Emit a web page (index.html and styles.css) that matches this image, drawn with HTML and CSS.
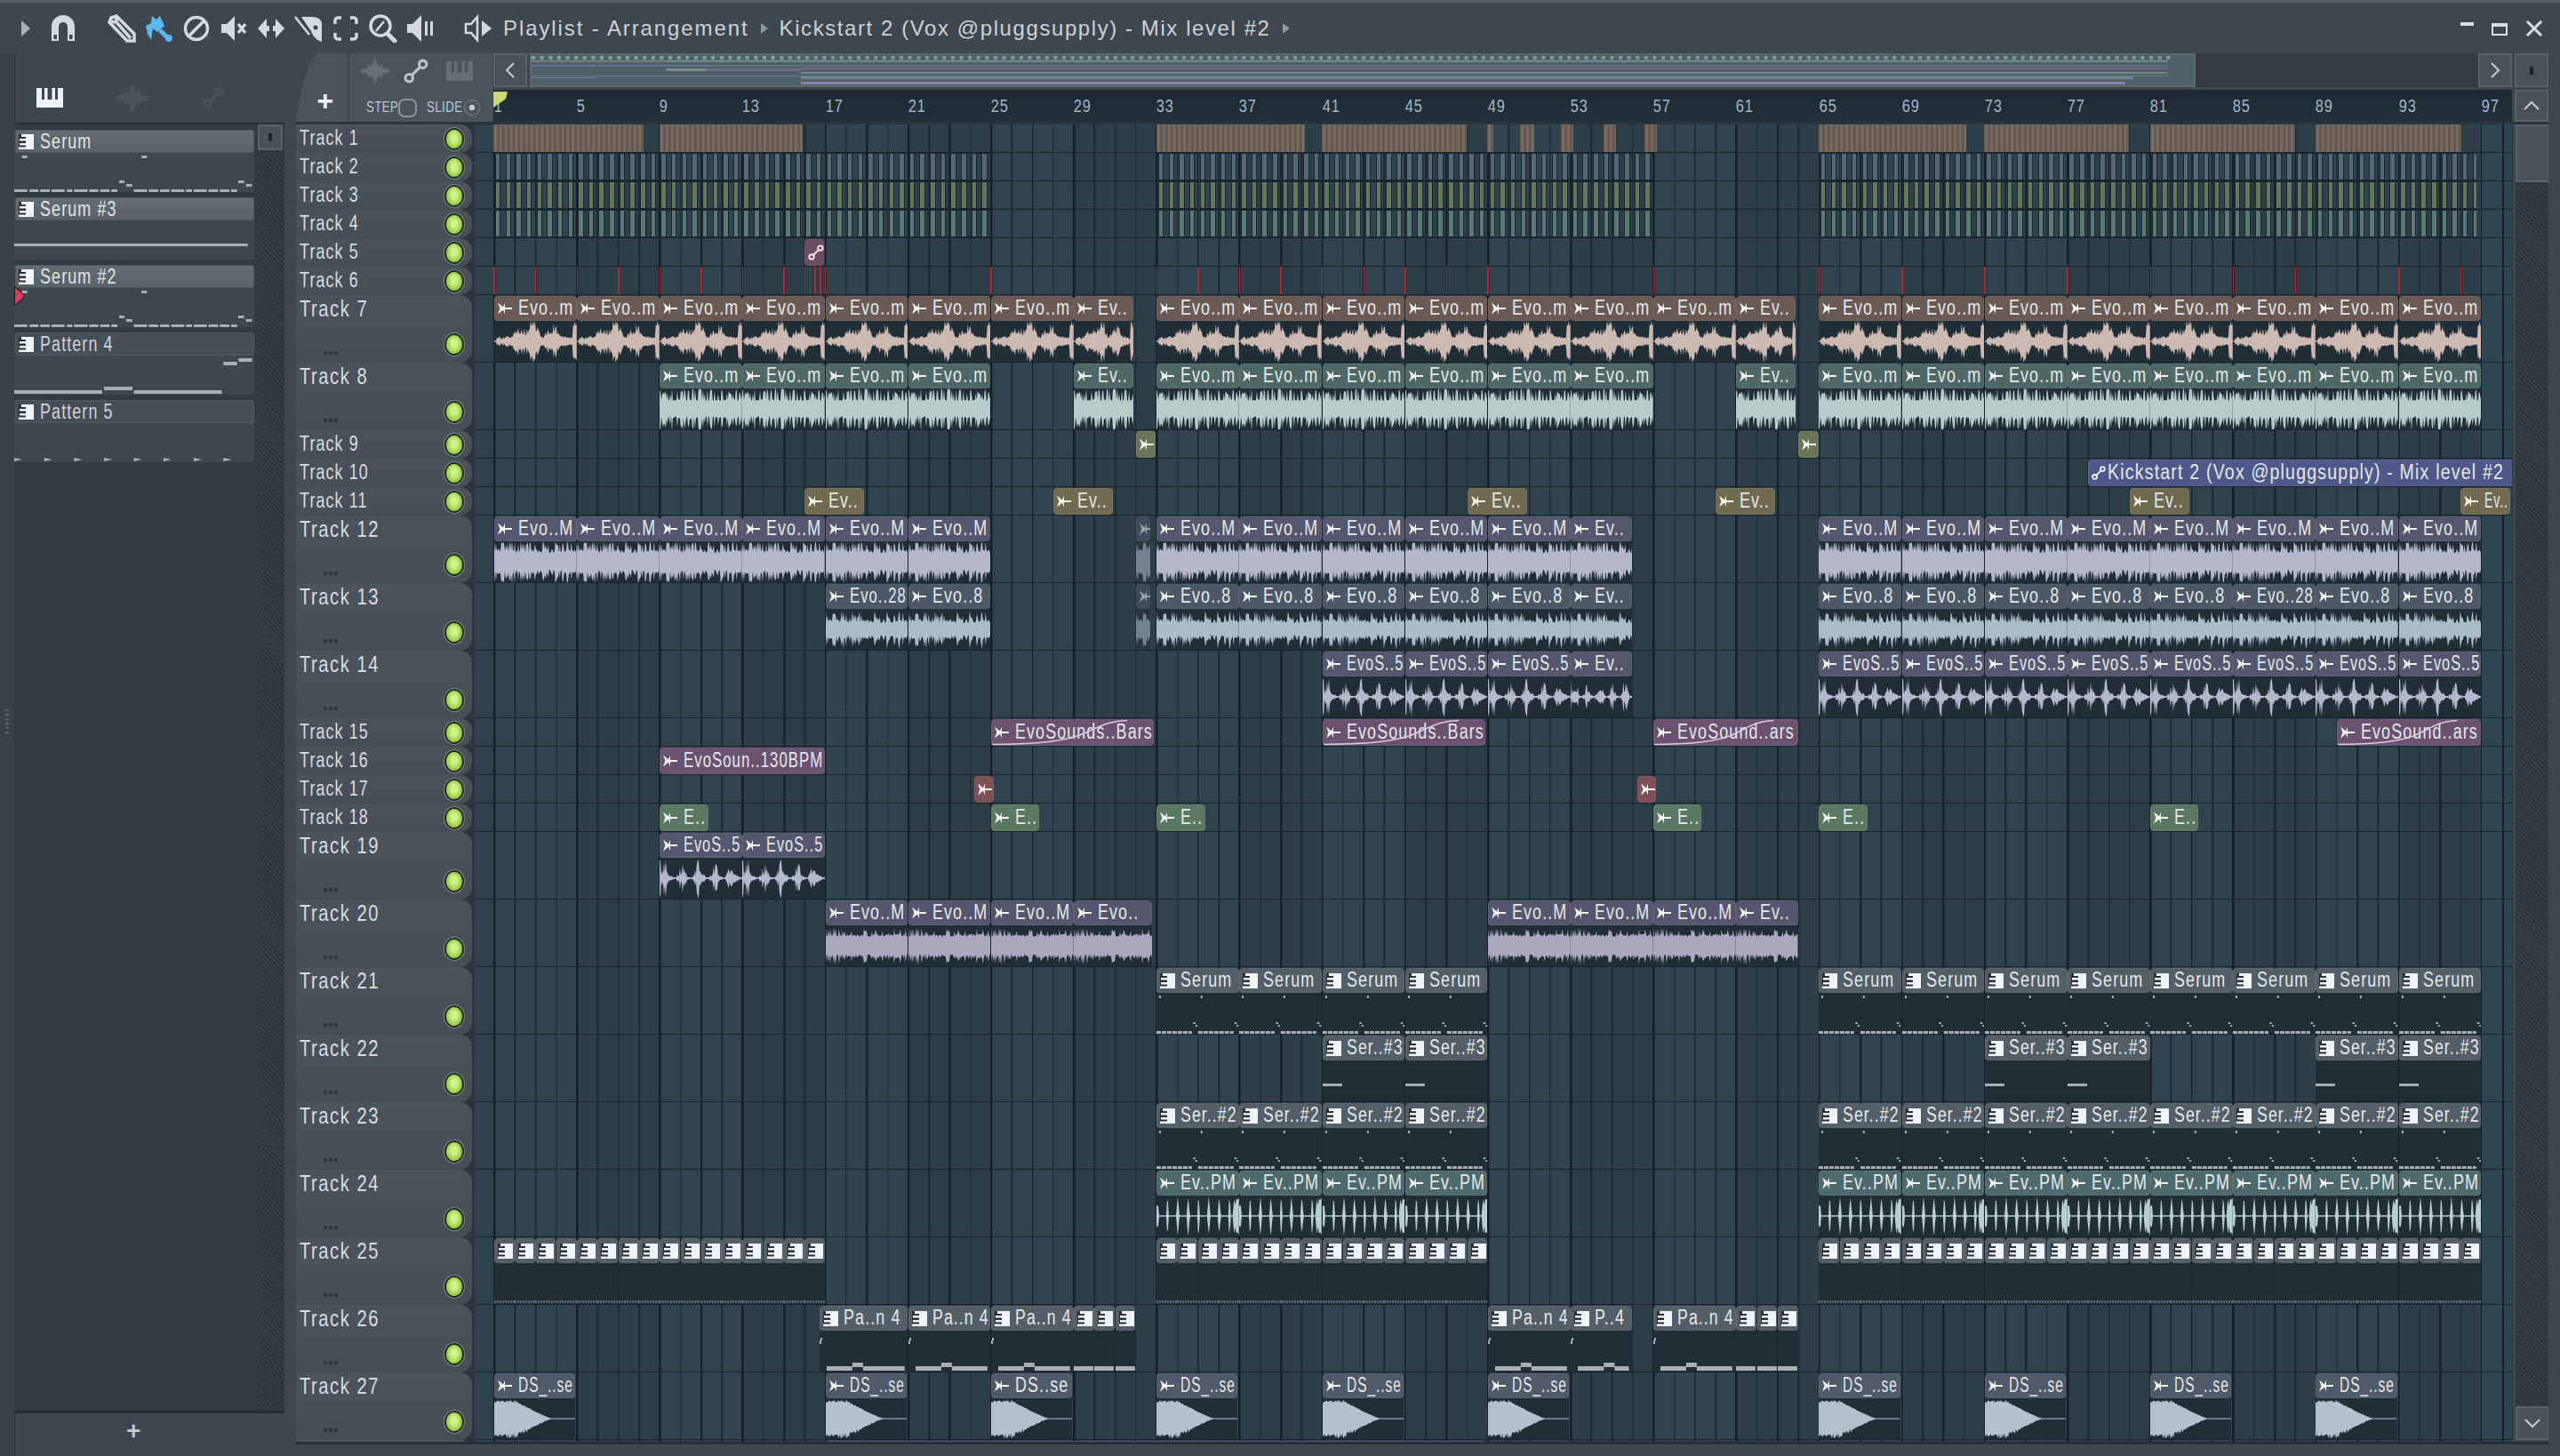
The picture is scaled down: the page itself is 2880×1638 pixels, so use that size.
FILE: index.html
```html
<!DOCTYPE html>
<html lang="en">
<head>
<meta charset="utf-8">
<title>Playlist - Arrangement</title>
<link rel="stylesheet" href="styles.css">
</head>
<body>
<svg class="defs" width="0" height="0" aria-hidden="true">
  <symbol id="i-audio" viewBox="0 0 16 14"><path d="M0 0.5 L6 5.5 L8 0.5 V6 H16 V8 H8 V13.5 L6 8.5 L0 13.5 L2.5 7Z"/></symbol>
  <symbol id="i-pat" viewBox="0 0 17 17"><path d="M8 0H17V17H8ZM3 0H8V3H3ZM1 5H8V7.5H1ZM1 10H8V12.5H1ZM0 14.5H8V17H0Z"/></symbol>
  <symbol id="i-link" viewBox="0 0 20 20"><path class="lk" d="M6.5 13.5L13.5 6.5"/><circle class="lk" cx="4.5" cy="15.5" r="3"/><circle class="lk" cx="15.5" cy="4.5" r="3"/></symbol>
  <symbol id="i-wave" viewBox="0 0 40 34"><path d="M0 17L6 13 9 15 12 8 15 12 20 0 25 12 28 8 31 15 34 13 40 17 34 21 31 19 28 26 25 22 20 34 15 22 12 26 9 19 6 21Z"/></symbol>
  <symbol id="i-piano" viewBox="0 0 30 22"><path d="M0 0H6V13H9V0H12.5V13H17.5V0H21V13H24V0H30V22H0Z"/></symbol>
</svg>
<div class="app">
  <header class="titlebar">
    <span class="tool"><svg viewBox="0 0 32 32"><path class="dim" d="M11 7L21 16 11 25Z"/></svg></span>
    <span class="tool"><svg viewBox="0 0 32 32"><path d="M3 30V14a13 13 0 0 1 26 0V30H21V14a5 5 0 0 0-10 0V30Z"/><path class="cut" d="M5.500 23H9V28H5.500ZM23 23H26.500V28H23Z"/></svg></span>
    <span class="tool sep"><svg viewBox="0 0 32 32"><path class="ln" d="M2 9L4 4 10 2 30 22V30H22ZM3 8L10 9 10 3M10 9L26 27"/></svg></span>
    <span class="tool blue"><svg viewBox="0 0 32 32"><path d="M1 13L7 10 8 2 13 6 17 2 22 13 14 20 9 16 7 29 3 22Z"/><path class="ln" d="M17 18L26 27"/><circle cx="27" cy="27" r="4"/></svg></span>
    <span class="tool"><svg viewBox="0 0 32 32"><circle class="ln" cx="16" cy="16" r="12.500"/><path class="ln" d="M8 24L24 8"/></svg></span>
    <span class="tool"><svg viewBox="0 0 32 32"><path d="M2 11H8L17 2V30L8 21H2Z"/><path class="ln" d="M21 11L29 21M29 11L21 21"/></svg></span>
    <span class="tool"><svg viewBox="0 0 32 32"><path d="M1 16L11 5V13H14V19H11V27ZM31 16L21 5V13H18V19H21V27Z"/></svg></span>
    <span class="tool"><svg viewBox="0 0 32 32"><path d="M8 3H20C28 3 31 7 31 11V31C25 29 21 25 19 19Z"/><circle class="hole" cx="24" cy="15" r="2.500"/><path class="ln thin" d="M1 3L17 23"/></svg></span>
    <span class="tool"><svg viewBox="0 0 32 32"><path class="ln" d="M11 4H7a3 3 0 0 0-3 3V11M21 4h4a3 3 0 0 1 3 3v4M4 21v4a3 3 0 0 0 3 3h4M28 21v4a3 3 0 0 1-3 3h-4"/></svg></span>
    <span class="tool"><svg viewBox="0 0 32 32"><circle class="ln" cx="13" cy="13" r="11"/><path class="ln thin" d="M8 19L17 8"/><path class="ln fat" d="M22 23L29 30"/></svg></span>
    <span class="tool"><svg viewBox="0 0 32 32"><path d="M1 11H7L17 1V31L7 21H1ZM21 8H24V24H21ZM27 8H30V24H27Z"/></svg></span>
    <span class="tool sep2"><svg viewBox="0 0 32 32"><path class="ln thin" d="M2 11H8L15 3V29L8 21H2Z"/><path d="M20 7L31 16 20 25Z"/></svg></span>
    <h1 class="title">Playlist - Arrangement</h1>
    <svg class="crumb" viewBox="0 0 8 12"><path d="M0 0L8 6 0 12Z"/></svg>
    <span class="title second">Kickstart 2 (Vox @pluggsupply) - Mix level #2</span>
    <svg class="crumb" viewBox="0 0 8 12"><path d="M0 0L8 6 0 12Z"/></svg>
    <div class="winctl">
      <span class="w-min"></span>
      <span class="w-max"></span>
      <svg class="w-close" viewBox="0 0 20 20"><path d="M2 2L18 18M18 2L2 18"/></svg>
    </div>
  </header>
  <div class="main">
    <aside class="picker">
      <div class="picker-tabs">
        <svg class="ptab on"><use href="#i-piano"/></svg>
        <svg class="ptab wave-i"><use href="#i-wave"/></svg>
        <svg class="ptab link-i"><use href="#i-link"/></svg>
      </div>
      <div class="picker-panel">
        <div class="picker-list" id="pickerList"></div>
        <div class="pscroll">
          <span class="sbtn small"><i class="pip"></i></span>
          <span class="hatch"></span>
        </div>
        <svg class="marker" viewBox="0 0 13 22"><path d="M0.500 0.500L12 11 0.500 21.500Z"/></svg>
      </div>
      <div class="picker-foot">+</div>
    </aside>
    <section class="playlist">
      <div class="topbar">
        <div class="plus-tab"><span>+</span></div>
        <div class="toolpanel">
          <div class="tp-icons">
            <svg class="tp-wave"><use href="#i-wave"/></svg>
            <svg class="tp-link"><use href="#i-link"/></svg>
            <svg class="tp-piano"><use href="#i-piano"/></svg>
          </div>
          <div class="tp-modes">
            <span class="tp-t">STEP</span><i class="tp-box"></i>
            <span class="tp-t slide">SLIDE</span><i class="tp-radio"></i>
          </div>
        </div>
        <div class="timeline">
          <div class="overview-row">
            <span class="sbtn"><svg class="chev" viewBox="0 0 12 20"><path d="M10 2L2 10 10 18"/></svg></span>
            <div class="overview-track"><div class="overview" id="overview"></div></div>
            <span class="sbtn"><svg class="chev" viewBox="0 0 12 20"><path d="M2 2L10 10 2 18"/></svg></span>
          </div>
          <div class="ruler" id="ruler">
            <svg class="playhead" viewBox="0 0 17 19"><path d="M0 0H16L14 8 0 18Z"/></svg>
          </div>
        </div>
        <div class="topscroll">
          <span class="sbtn"><i class="pip"></i></span>
          <span class="sbtn"><svg class="chev" viewBox="0 0 20 12"><path d="M2 10L10 2 18 10"/></svg></span>
        </div>
      </div>
      <div class="tracks">
        <div class="rows" id="rows"></div>
        <div class="vscroll">
          <span class="thumb"></span>
          <span class="hatch"></span>
          <span class="sbtn"><svg class="chev" viewBox="0 0 20 12"><path d="M2 2L10 10 18 2"/></svg></span>
        </div>
      </div>
    </section>
  </div>
  <i class="grip"></i>
</div>
<script src="script.js"></script>
</body>
</html>
```
FILE: styles.css
```css
* { box-sizing: border-box; }
html, body { margin: 0; padding: 0; }
body {
  width: 2880px; height: 1638px; overflow: hidden;
  background: #3f474e; color: #d5dce0;
  font-family: "Liberation Sans", Roboto, sans-serif;
  font-size: 23px; letter-spacing: 1.4px;
}
.defs { position: absolute; }
.app { position: relative; width: 2880px; height: 1638px; display: flex; flex-direction: column; border-top: 3px solid #59616a; }
.grip { position: absolute; left: 6px; top: 795px; width: 4px; height: 28px; background: repeating-linear-gradient(180deg, #59616a 0 2px, transparent 2px 5px); }
/* FL's narrow UI face: the Arial-metric font squeezed horizontally */
.nar { display: inline-block; flex: none; transform: scaleX(.78); transform-origin: 0 50%; white-space: nowrap; }

/* title bar */
.titlebar { height: 57px; flex: none; display: flex; align-items: center; padding-left: 8px; color: #d5dade; }
.tool { width: 42px; height: 32px; display: flex; justify-content: center; flex: none; }
.tool svg { width: 32px; height: 32px; fill: #d5dade; }
.tool .dim { fill: #aab2b8; }
.tool .cut { fill: #3f474e; }
.tool .ln { fill: none; stroke: #d5dade; stroke-width: 3.5; }
.tool .thin { stroke-width: 2.5; }
.tool .fat { stroke-width: 5; stroke-linecap: round; }
.tool .hole { fill: #3f474e; }
.tool.sep { margin-left: 24px; }
.tool.sep2 { margin-left: 23px; }
.tool.blue svg { fill: #5cb8f0; }
.tool.blue .ln { stroke: #5cb8f0; stroke-width: 5; }
.title { margin: 0 0 0 7px; font: 400 24px "Liberation Sans", Arial, sans-serif; letter-spacing: 1.900px; color: #ccd3d8; white-space: nowrap; }
.title.second { margin-left: 0; letter-spacing: 1.580px; }
.crumb { width: 8px; height: 12px; fill: #8f989e; margin: 0 13px; }
.winctl { margin-left: auto; display: flex; align-items: center; padding-right: 19px; gap: 20px; color: #d9e0e4; }
.w-min { width: 15px; height: 4px; background: #d9e0e4; margin-bottom: 9px; }
.w-max { width: 18px; height: 14px; border: 2px solid #d9e0e4; border-top-width: 4px; margin-top: 2px; }
.w-close { width: 20px; height: 20px; fill: none; stroke: #d9e0e4; stroke-width: 3; }

.main { flex: 1; display: flex; padding-left: 16px; box-shadow: inset 16px 0 0 #3a4249, inset 17px 0 0 #30383f; min-height: 0; }

/* picker */
.picker { width: 304px; flex: none; display: flex; flex-direction: column; height: 1576px; }
.picker-tabs { height: 78px; flex: none; position: relative; display: flex; align-items: center; padding-top: 22px; }
.ptab { width: 30px; height: 22px; margin-left: 25px; fill: #4c545b; }
.ptab.on { fill: #eef2f4; }
.ptab.wave-i { width: 42px; height: 34px; margin-left: 57px; }
.ptab.link-i { width: 24px; height: 24px; margin-left: 58px; stroke: #4c545b; }
.lk { stroke-width: 2.2; fill: none; }
.picker-panel { flex: 1; position: relative; display: flex; background: #323b43; border-top: 2px solid #262f36; min-height: 0; }
.picker-list { width: 270px; padding-top: 6px; flex: none; display: flex; flex-direction: column; gap: 6px; }
.pclip { height: 70px; background: #3f474e; display: flex; flex-direction: column; border-radius: 2px; }
.pclip-h { height: 26px; background: #474f56; border: 1px solid #52595f; border-radius: 2px; display: flex; align-items: center; padding-left: 3px; margin-left: 1px; color: #cdd5da; line-height: 24px; }
.pclip.sel .pclip-h { background: linear-gradient(#646c72, #5a6268); color: #e0e6e9; }
.pclip-h .nar { margin-left: 7px; }
.pat { width: 17px; height: 17px; fill: #eef4f7; background: #2b3137; flex: none; }
.pnotes { width: 270px; height: 44px; fill: #a8b0b5; display: block; }
.pscroll { width: 30px; margin-left: 4px; display: flex; flex-direction: column; }
.pscroll .sbtn { height: 29px; width: 28px; flex: none; }
.hatch { flex: 1; display: block; background: repeating-linear-gradient(45deg, #2d343a 0 2px, #363d43 2px 4px); }
.marker { position: absolute; left: 0; top: 182px; width: 13px; height: 22px; fill: #e53a60; stroke: #1d1416; stroke-width: 1; }
.picker-foot { height: 49px; flex: none; border-top: 3px solid #262f36; display: flex; align-items: center; justify-content: center; font: 700 28px "Liberation Sans", sans-serif; color: #bfc8cd; padding: 0 34px 6px 0; }

/* playlist */
.playlist { flex: 1; min-width: 0; margin-left: 13px; padding-right: 13px; display: flex; flex-direction: column; height: 1568px; }
.topbar { display: flex; height: 77px; flex: none; }
.plus-tab { width: 58px; background: #4c545b; clip-path: path("M0 77C5 40 12 12 24 0H58V77Z"); display: flex; align-items: flex-end; justify-content: center; padding: 0 0 2px 9px; font: 700 32px "Liberation Sans", sans-serif; color: #eef2f4; line-height: 44px; }
.toolpanel { width: 161px; margin-left: 2px; background: #4c545b; display: flex; flex-direction: column; }
.tp-icons { height: 40px; display: flex; align-items: center; fill: #666e74; }
.tp-wave { width: 40px; height: 30px; margin-left: 9px; }
.tp-link { width: 34px; height: 28px; margin-left: 9px; stroke: #bcc4c9; }
.tp-piano { width: 30px; height: 22px; margin-left: 17px; }
.tp-modes { display: flex; align-items: center; height: 28px; margin-top: 7px; padding-left: 19px; font-size: 16px; letter-spacing: .6px; color: #bfc7cc; }
.tp-t { display: inline-block; flex: none; width: 36px; transform: scaleX(.82); transform-origin: 0 50%; white-space: nowrap; }
.tp-box { width: 21px; height: 21px; flex: none; border: 2px solid #8d959b; border-radius: 7px; margin-left: 0; }
.tp-t.slide { margin-left: 11px; }
.tp-radio { width: 18px; height: 18px; flex: none; margin-left: 6px; border-radius: 50%; border: 1px solid #7f878d; background: radial-gradient(circle, #c5cdd2 0 3px, #4c545b 3.6px); }
.timeline { width: 2271px; margin-left: 1px; display: flex; flex-direction: column; }
.overview-row { display: flex; height: 38px; flex: none; }
.sbtn { width: 38px; height: 38px; flex: none; background: #4a5259; border: 2px solid #5a6268; display: flex; align-items: center; justify-content: center; }
.pip { display: block; width: 4px; height: 9px; background: #1c2329; }
.chev { width: 14px; height: 20px; fill: none; stroke: #c5cdd2; stroke-width: 2; }
.topscroll .chev, .vscroll .chev { width: 20px; height: 12px; }
.overview-track { flex: 1; margin-left: 3px; background: #353d44; min-width: 0; }
.overview { width: 1874px; height: 38px; background: #4f6068; border: 2px solid #5e6a70; overflow: hidden; }
.overview svg { width: 1870px; height: 34px; display: block; }
.ruler { position: relative; height: 36px; margin-top: 3px; background: linear-gradient(#1d2a32, #22303a); display: flex; font-size: 20px; letter-spacing: 1px; color: #a4b6c8; align-items: center; }
.ruler span { width: 93.160px; flex: none; padding-left: 1px; transform: scaleX(.82); transform-origin: 0 50%; }
.playhead { position: absolute; left: 0; top: 2px; width: 17px; height: 19px; fill: #c8da72; stroke: #93a350; stroke-width: .6; z-index: 1; }
.topscroll { width: 38px; margin-left: 3px; flex: none; display: flex; flex-direction: column; gap: 3px; }
.topscroll .sbtn:last-child { height: 36px; }

.tracks { height: 1488px; flex: none; display: flex; border-top: 3px solid #2a343b; border-bottom: 3px solid #262f36; overflow: hidden; }
.rows { width: 2494px; flex: none; overflow: hidden; background: #2c353c; box-shadow: -1px 0 0 #262f36; }
.row { display: flex; height: 32px; }
.row.tall { height: 76px; }
.head { width: 198px; flex: none; background: linear-gradient(#4c535a, #464e55); border-radius: 0 14px 14px 0; display: flex; align-items: center; justify-content: space-between; padding: 0 11px 0 4px; color: #d6dde1; line-height: 28px; }
.head > .nar { margin-top: -3px; }
.row.tall .head { flex-direction: column; align-items: stretch; justify-content: flex-start; font-size: 26px; letter-spacing: 1.900px; padding-top: 1px; }
.row.tall .head > .nar { margin-top: 0; }
.head-foot { margin-top: auto; display: flex; justify-content: space-between; align-items: flex-end; padding: 0 0 10px 27px; }
.dots { display: flex; gap: 2px; margin-bottom: -1px; }
.dots i { width: 4px; height: 4px; background: #2f363c; }
.led { width: 18px; height: 21px; flex: none; border-radius: 50%; background: radial-gradient(ellipse at 50% 45%, #d2f08c 0 25%, #9acb3e 65%, #5d8d1c 100%); box-shadow: 0 0 0 2px #1f2b1e, 0 0 0 3px #7f8a80; }
.lane { position: relative; width: 2292px; margin-left: 3px; flex: none; overflow: hidden; border-bottom: 1px solid #18232b;
  background-color: #2e3f4a;
  background-image:
    repeating-linear-gradient(90deg, #141f27 0 1.700px, transparent 1.700px 93.160px),
    repeating-linear-gradient(90deg, #17232b 0 1.600px, transparent 1.600px 46.580px),
    repeating-linear-gradient(90deg, #1c2832 0 1.500px, transparent 1.500px 23.290px),
    repeating-linear-gradient(90deg, #31434e 0 93.160px, #2d3e49 93.160px 186.320px);
  background-position: 21.300px 0;
}
.lane::before { content: ""; position: absolute; left: 0; top: 0; bottom: 0; width: 21px; background: #2f414b; }
.lane::after { content: ""; position: absolute; left: 2258px; top: 0; bottom: 0; width: 34px; background: linear-gradient(90deg, #2d4652 0 23px, #17232b 23px 25px, #2d4652 25px); }
.clip { position: absolute; top: 1px; height: 30px; z-index: 1; display: flex; flex-direction: column; border-radius: 4px; overflow: hidden; }
.tall .clip { height: 74px; background: #212e36; border-radius: 4px 4px 0 0; }
.clip-h { height: 28px; flex: none; border-radius: 4px; display: flex; align-items: center; padding-left: 4px; background: var(--hc); box-shadow: inset 0 0 0 1px rgba(255,255,255,.05); color: #e4e9ea; overflow: hidden; line-height: 28px; position: relative; }
.clip-h .nar { margin-top: -3px; }
.row:not(.tall) .clip-h { height: 30px; }
.ci { width: 16px; height: 14px; flex: none; margin-right: 7px; fill: #f6f8f4; }
.pi { width: 17px; height: 17px; flex: none; margin-right: 6px; fill: #eef4f7; background: #2b3137; }
.clip-body { flex: 1; display: block; width: 100%; min-height: 0; }
.wave-svg { fill: var(--wc); }
.note-svg { fill: #a8b0b5; stroke: none; }
.dash { stroke: #a8b0b5; stroke-width: 3; stroke-dasharray: 5 1; fill: none; }
.tick-body { flex: 1; background: repeating-linear-gradient(90deg, #5c666d 0 2px, transparent 2px 3px) bottom / 100% 3px no-repeat; margin-bottom: 1px; }
.curve { position: absolute; left: 0; top: 0; width: 100%; height: 100%; fill: none; stroke: #dccbe2; stroke-width: 1.600; }
.small-link { width: 22px; height: 22px; margin: 0; fill: none; stroke: #f0e6ee; }
.link16 { width: 16px; height: 16px; flex: none; margin-right: 2px; stroke: #f0f2f8; }
.c1 { --hc: #7a6c60; }
.c5 { --hc: #6e4c60; }
.c7 { --hc: #6a5a54; --wc: #cbb9b2; }
.c8 { --hc: #4f6866; --wc: #b6cdca; }
.c9 { --hc: #6b7558; }
.c10 { --hc: #505889; }
.c11 { --hc: #6f6a50; }
.c12 { --hc: #55576e; --wc: #b5b7cc; }
.c13 { --hc: #4c5866; --wc: #aabcc6; }
.c14 { --hc: #55576e; --wc: #b5b7cc; }
.c15, .c16 { --hc: #6a5270; }
.c17 { --hc: #7c5256; }
.c18 { --hc: #5a7862; }
.c19 { --hc: #55576e; --wc: #b5b7cc; }
.c20 { --hc: #55566e; --wc: #aaa8bf; }
.c21, .c22, .c23, .c25, .c26 { --hc: #545e66; }
.c24 { --hc: #4e6a6c; --wc: #b7cfd0; }
.c27 { --hc: #505a68; --wc: #b4c0cc; }
.c28 { --hc: #4a4f80; }
.faded { opacity: .55; }
.stripe { position: absolute; top: 0; height: 31px; z-index: 1; background: repeating-linear-gradient(90deg, #5f544b 0, #7d7065 2.500px, #5f544b 5.800px); }
.notes { position: absolute; top: 0; height: 31px; z-index: 1; background: repeating-linear-gradient(90deg, transparent 0 2px, #1c2730 2px 3px, var(--nc) 3px 7.500px, #1c2730 7.500px 8.500px, transparent 8.500px 11.645px); border-top: 1px solid #1c2730; border-bottom: 1px solid #1c2730; }
.n2 { --nc: #536a76; }
.n3 { --nc: #63775a; }
.n4 { --nc: #5c7a74; }
.red { position: absolute; top: 0; bottom: 0; width: 1.500px; background: #b3262f; z-index: 1; }
.vscroll { width: 38px; margin-left: 3px; flex: none; display: flex; flex-direction: column; }
.thumb { height: 65px; flex: none; display: block; background: #4a5259; border: 2px solid #5a6268; }
.vscroll .sbtn { margin-bottom: 2px; }
```
FILE: script.js
```js
(function () {
  var BAR = 23.29, X0 = 21.3, NAR = 0.78;
  function xb(b) { return X0 + (b - 1) * BAR; }
  function range(a, b, s) { var o = []; for (var i = a; i <= b; i += (s || 4)) o.push(i); return o; }
  function rng(seed) { var s = seed; return function () { s = (s * 16807) % 2147483647; return s / 2147483647; }; }
  function use(cls, id) { return '<svg class="' + cls + '"><use href="#' + id + '"/></svg>'; }
  function nar(t) { return '<span class="nar">' + t + '</span>'; }

  /* ---------- waveforms ---------- */
  function bell(t, c, w) { return Math.exp(-Math.pow((t - c) / w, 2)); }
  var amp = {
    burst: function (t, i, r) {
      var e = 0.18 + 0.9 * bell(t, 0.47, 0.07) + 0.45 * bell(t, 0.3, 0.09) + 0.55 * bell(t, 0.72, 0.09);
      if (t > 0.955) return 0.6 + 0.4 * r();
      if (t < 0.03) return 0.03;
      return Math.min(1, e * (r() < 0.35 ? 0.95 + 0.25 * r() : 0.5 + 0.3 * r()));
    },
    d8: function (t, i, r) { return r() < 0.5 ? 0.7 + 0.3 * r() : 0.38 + 0.1 * r(); },
    d12: function (t, i, r) { return r() < 0.45 ? 0.8 + 0.2 * r() : 0.42 + 0.2 * r(); },
    d13: function (t, i, r) { return r() < 0.4 ? 0.55 + 0.4 * r() : 0.32 + 0.2 * r(); },
    p14: function (t, i, r) {
      if (t < 0.012) return 0.95;
      var p = (t * 5) % 1, e = bell(p, 0.38, 0.24) * (Math.floor(t * 5) % 2 ? 0.7 : 0.95);
      return Math.min(1, 0.04 + e * (r() < 0.4 ? 0.9 + 0.2 * r() : 0.2 + 0.25 * r()));
    },
    l20: function (t, i, r) { return r() < 0.35 ? 0.55 + 0.35 * r() : 0.42 + 0.15 * r(); },
    s24: function (t, i, r) {
      if (t > 0.93) return 0.35 + 0.65 * r();
      if (t < 0.025) return 0.5;
      var d = Math.abs(((i + 5) % 11.65) - 5.8);
      return d < 1.3 ? 0.95 * (1 - d / 1.9) + 0.04 : 0.03;
    },
    d27: function (t, i, r) {
      if (t < 0.25) return 0.86 + 0.14 * r();
      if (t > 0.72) return 0.02;
      var v = 1 - (t - 0.25) / 0.47;
      return Math.max(0.02, Math.pow(v, 1.2) * (0.92 + 0.12 * r()));
    }
  };
  var waveCache = {};
  function wave(kind, w, h, scale) {
    var key = kind + '|' + Math.round(w) + '|' + h;
    if (!waveCache[key]) {
      var r = rng(7919 + kind.length * 101 + kind.charCodeAt(1) * 37), mid = h / 2, top = [], bot = [], W = Math.round(w);
      for (var i = 0; i <= W; i++) {
        var a = amp[kind](i / W, i, r) * mid * scale;
        var b = a * (0.88 + 0.24 * r());
        top.push(i + ' ' + (mid - a).toFixed(1));
        bot.unshift(i + ' ' + (mid + b).toFixed(1));
      }
      waveCache[key] = 'M' + top.join('L') + 'L' + bot.join('L') + 'Z';
    }
    return '<svg class="clip-body wave-svg" viewBox="0 0 ' + Math.round(w) + ' ' + h + '" preserveAspectRatio="none"><path d="' + waveCache[key] + '"/></svg>';
  }

  /* ---------- pattern notes in clips ---------- */
  function rect(x, y, w, h) { return 'M' + x + ' ' + y + 'h' + w + 'v' + h + 'h-' + w + 'Z'; }
  function serumNotes(w) {
    var s = '';
    [3, 50].forEach(function (x) { s += rect(x, 3, 2, 3); });
    [41.5, 88].forEach(function (x) { if (x < w) { s += rect(x, 33, 2.5, 2); s += rect(x + 2.5, 36, 2, 2); } });
    return '<svg class="clip-body note-svg" viewBox="0 0 ' + w + ' 46" preserveAspectRatio="none"><path d="' + s + '"/>' +
      '<path class="dash" d="M0 44.500H40M47 44.500H87"/></svg>';
  }
  function ser3Notes(w) { return '<svg class="clip-body note-svg" viewBox="0 0 ' + w + ' 46" preserveAspectRatio="none"><path d="' + rect(0, 26, 22, 3) + '"/></svg>'; }
  function pat4Notes(w, full) {
    var s = '';
    if (full) s = rect(0, 40, w - 1, 5);
    else {
      s = rect(1, 8, 2, 3) + rect(0, 11, 2, 4) + rect(8, 40, 29, 5) + rect(37, 36, 12, 5) + rect(49, 40, Math.max(1, w - 53), 5);
    }
    return '<svg class="clip-body note-svg" viewBox="0 0 ' + w + ' 46" preserveAspectRatio="none"><path d="' + s + '"/></svg>';
  }

  /* ---------- track data ---------- */
  function A(bars, label, w, extra) {
    return bars.map(function (b) { return Object.assign({ t: 'a', b: b, l: label, w: w || 4 }, extra || {}); });
  }
  function P(bars, label, w, extra) {
    return bars.map(function (b) { return Object.assign({ t: 'p', b: b, l: label, w: w || 4 }, extra || {}); });
  }
  function lane(cs) { return [].concat.apply([], cs); }

  var t = {};
  t[5] = A([16], '', 1, { link: true, w: 0.96 });
  t[7] = lane([A(range(1, 25), 'Evo..m', 4, { wv: 'burst' }), A([29], 'Ev..', 2.9, { wv: 'burst' }), A(range(33, 57), 'Evo..m', 4, { wv: 'burst' }), A([61], 'Ev..', 2.9, { wv: 'burst' }), A(range(65, 93), 'Evo..m', 4, { wv: 'burst' })]);
  t[8] = lane([A(range(9, 21), 'Evo..m', 4, { wv: 'd8' }), A([29], 'Ev..', 2.9, { wv: 'd8' }), A(range(33, 53), 'Evo..m', 4, { wv: 'd8' }), A([61], 'Ev..', 2.9, { wv: 'd8' }), A(range(65, 93), 'Evo..m', 4, { wv: 'd8' })]);
  t[9] = A([32, 64], '', 0.98);
  t[10] = [{ t: 'a', b: 78, w: 21, l: 'Kickstart 2 (Vox @pluggsupply) - Mix level #2', link16: true, sx: 0.85 }];
  t[11] = A([16, 28, 48, 60, 80], 'Ev..', 2.9).concat(A([96], 'Ev..', 2.42));
  t[12] = lane([A(range(1, 21), 'Evo..M', 4, { wv: 'd12' }), A([32], '', 0.72, { wv: 'd12', dim: true }), A(range(33, 49), 'Evo..M', 4, { wv: 'd12' }), A([53], 'Ev..', 3, { wv: 'd12' }), A(range(65, 93), 'Evo..M', 4, { wv: 'd12' })]);
  t[13] = lane([A([17], 'Evo..28', 4, { wv: 'd13' }), A([21], 'Evo..8', 4, { wv: 'd13' }), A([32], '', 0.72, { wv: 'd13', dim: true }), A(range(33, 49), 'Evo..8', 4, { wv: 'd13' }), A([53], 'Ev..', 3, { wv: 'd13' }), A([65, 69, 73, 77, 81], 'Evo..8', 4, { wv: 'd13' }), A([85], 'Evo..28', 4, { wv: 'd13' }), A([89, 93], 'Evo..8', 4, { wv: 'd13' })]);
  t[14] = lane([A([41, 45, 49], 'EvoS..5', 4, { wv: 'p14' }), A([53], 'Ev..', 3, { wv: 'p14' }), A(range(65, 93), 'EvoS..5', 4, { wv: 'p14' })]);
  t[15] = lane([A([25, 41], 'EvoSounds..Bars', 7.9, { curve: true }), A([57, 90], 'EvoSound..ars', 7, { curve: true })]);
  t[16] = A([9], 'EvoSoun..130BPM', 8);
  t[17] = A([24.2, 56.2], '', 0.95);
  t[18] = A([9, 25, 33, 57, 65, 81], 'E..', 2.35);
  t[19] = A([9, 13], 'EvoS..5', 4, { wv: 'p14' });
  t[20] = lane([A([17, 21, 25], 'Evo..M', 4, { wv: 'l20' }), A([29], 'Evo..', 3.8, { wv: 'l20' }), A([49, 53, 57], 'Evo..M', 4, { wv: 'l20' }), A([61], 'Ev..', 3, { wv: 'l20' })]);
  t[21] = lane([P([33, 37, 41, 45], 'Serum', 4, { n: 's' }), P(range(65, 93), 'Serum', 4, { n: 's' })]);
  t[22] = lane([P([41, 45, 73, 77, 89, 93], 'Ser..#3', 4, { n: '3' })]);
  t[23] = lane([P([33, 37, 41, 45], 'Ser..#2', 4, { n: 's' }), P(range(65, 93), 'Ser..#2', 4, { n: 's' })]);
  t[24] = lane([A([33, 37, 41, 45], 'Ev..PM', 4, { wv: 's24' }), A(range(65, 93), 'Ev..PM', 4, { wv: 's24' })]);
  t[25] = lane([P(range(1, 16, 1), '', 1, { n: 't' }), P(range(33, 48, 1), '', 1, { n: 't' }), P(range(65, 96, 1), '', 1, { n: 't' })]);
  t[26] = lane([P([16.7], 'Pa..n 4', 4.3, { n: 'p', first: true }), P([21, 25], 'Pa..n 4', 4, { n: 'p' }), P([29, 30, 31], '', 1, { n: 'pf' }), P([49], 'Pa..n 4', 4, { n: 'p' }), P([53], 'P..4', 3, { n: 'p' }), P([57], 'Pa..n 4', 4, { n: 'p' }), P([61, 62, 63], '', 1, { n: 'pf' })]);
  t[27] = A([1, 17, 33, 41, 49, 65, 73, 81, 89], 'DS_..se', 3.93, { wv: 'd27' }).concat(A([25], 'DS..se', 3.93, { wv: 'd27' }));
  t[28] = [{ t: 'a', b: 17, w: 32, l: '', bare: true }];

  var tall = { 7: 1, 8: 1, 12: 1, 13: 1, 14: 1, 19: 1, 20: 1, 21: 1, 22: 1, 23: 1, 24: 1, 25: 1, 26: 1, 27: 1, 28: 1 };
  var waveScale = { burst: 1, d8: 1, d12: 1, d13: 0.95, p14: 0.9, l20: 1, s24: 1, d27: 0.9 };

  function clipHtml(c, n) {
    var w = c.w * BAR - 0.4, left = xb(c.b) + 0.6, cls = 'clip c' + n + (c.dim ? ' faded' : '');
    var style = 'left:' + left.toFixed(2) + 'px;width:' + w.toFixed(2) + 'px';
    var icon = c.bare ? '' : (c.t === 'p' ? use('pi', 'i-pat') : (c.link16 ? use('link16', 'i-link') : (c.link ? use('small-link', 'i-link') : use('ci', 'i-audio'))));
    var label = c.l ? (c.sx ? '<span class="nar" style="transform:scaleX(' + c.sx + ')">' + c.l + '</span>' : nar(c.l)) : '';
    var h = '<div class="clip-h">' + icon + label;
    if (c.curve) {
      h += '<svg class="curve" viewBox="0 0 180 30" preserveAspectRatio="none"><path d="M0 28.500C40 28 70 27 95 19 115 12 125 2 150 1.500"/></svg>';
    }
    h += '</div>';
    var body = '', W = Math.round(w);
    if (n > 6 && tall[n]) {
      if (c.wv) body = wave(c.wv, W, 46, waveScale[c.wv]);
      else if (c.n === 's') body = serumNotes(W);
      else if (c.n === '3') body = ser3Notes(W);
      else if (c.n === 'p') body = pat4Notes(W, false);
      else if (c.n === 'pf') body = pat4Notes(W, true);
      else if (c.n === 't') body = '<div class="tick-body"></div>';
    }
    return '<div class="' + cls + '" style="' + style + '">' + h + body + '</div>';
  }

  var rows = '';
  for (var n = 1; n <= 28; n++) {
    var isTall = !!tall[n], inner = '';
    if (n === 1) {
      [[1, 8.25], [9, 15.95], [33, 40.2], [41, 48], [65, 72.15], [73, 80], [81, 88], [89, 96.05]].forEach(function (s) {
        inner += '<div class="stripe" style="left:' + xb(s[0]).toFixed(1) + 'px;width:' + ((s[1] - s[0]) * BAR).toFixed(1) + 'px"></div>';
      });
      [[1673, 1680], [1710, 1726], [1756, 1770], [1804, 1818], [1850, 1864]].forEach(function (s) {
        inner += '<div class="stripe" style="left:' + (s[0] - 534) + 'px;width:' + (s[1] - s[0]) + 'px"></div>';
      });
    }
    if (n >= 2 && n <= 4) {
      [[1, 25], [33, 57], [65, 96.8]].forEach(function (s) {
        inner += '<div class="notes n' + n + '" style="left:' + xb(s[0]).toFixed(1) + 'px;width:' + ((s[1] - s[0]) * BAR).toFixed(1) + 'px"></div>';
      });
    }
    if (n === 6) {
      var reds = range(1, 15, 2).concat([16, 16.25, 16.5, 16.75, 17, 25]).concat(range(33, 47, 2)).concat([49, 57, 65, 69, 73, 77, 81, 85, 88, 93, 96]);
      reds.forEach(function (b) { inner += '<i class="red" style="left:' + xb(b).toFixed(1) + 'px"></i>'; });
    }
    (t[n] || []).forEach(function (c) { inner += clipHtml(c, n); });
    var head = n === 28 ? '' : (isTall
      ? nar('Track ' + n) + '<div class="head-foot"><span class="dots"><i></i><i></i><i></i></span><span class="led"></span></div>'
      : nar('Track ' + n) + '<span class="led"></span>');
    rows += '<div class="row' + (isTall ? ' tall' : '') + '"><div class="head">' + head + '</div><div class="lane">' + inner + '</div></div>';
  }
  document.getElementById('rows').innerHTML = rows;

  /* long clip names are squeezed a little further so they stay inside their clip, as FL does */
  Array.prototype.forEach.call(document.querySelectorAll('.clip-h .nar'), function (el) {
    if (el.style.transform) return;
    var avail = el.parentNode.clientWidth - el.offsetLeft - 2, fit = avail / el.offsetWidth;
    if (fit < NAR) el.style.transform = 'scaleX(' + fit.toFixed(3) + ')';
  });

  /* ---------- ruler ---------- */
  var ruler = document.getElementById('ruler'), rh = '';
  for (var b = 1; b <= 97; b += 4) rh += '<span>' + b + '</span>';
  ruler.insertAdjacentHTML('beforeend', rh);

  /* ---------- picker ---------- */
  function d3(x, y, w, h) { return rect(+(x / 3 - 16).toFixed(2), y, +(w / 3).toFixed(2), h); }
  var serum = '';
  [[48, 92], [100, 130], [136, 168], [174, 218], [226, 244], [250, 295], [301, 332], [338, 370], [376, 396], [452, 496], [502, 534], [540, 572], [578, 622], [628, 648], [654, 698], [704, 736], [742, 774], [780, 800]].forEach(function (s) { serum += d3(s[0], 41, s[1] - s[0], 3); });
  [[402, 420, 31], [426, 446, 35], [804, 824, 31], [830, 850, 35], [74, 92, 3], [478, 496, 3]].forEach(function (s) { serum += d3(s[0], s[2], s[1] - s[0], 3); });
  var pat4 = d3(48, 39, 297, 4) + d3(351, 35, 96, 4) + d3(452, 39, 297, 4) + d3(754, 7, 46, 4) + d3(805, 3, 46, 4);
  var pat5 = '';
  [48, 149, 250, 351, 452, 552, 654, 754].forEach(function (x) { var X = +(x / 3 - 16).toFixed(1); pat5 += 'M' + X + ' 39l9 2 -9 2Z'; });
  var list = [['Serum', serum, 1], ['Serum #3', d3(48, 26, 788, 3), 1], ['Serum #2', serum, 1], ['Pattern 4', pat4, 0], ['Pattern 5', pat5, 0]];
  document.getElementById('pickerList').innerHTML = list.map(function (p) {
    return '<div class="pclip' + (p[2] ? ' sel' : '') + '"><div class="pclip-h">' + use('pat', 'i-pat') + nar(p[0]) + '</div>' +
      '<svg class="pnotes" viewBox="0 0 270 44"><path d="' + p[1] + '"/></svg></div>';
  }).join('');

  /* ---------- overview ---------- */
  var ov = '';
  function ol(x0, x1, y, h, c) { ov += '<rect x="' + (x0 - 598) + '" y="' + (y - 62).toFixed(1) + '" width="' + (x1 - x0) + '" height="' + h + '" fill="' + c + '"/>'; }
  for (var x = 597; x < 2439; x += 9.63) ol(x + 1, +(x + 5).toFixed(1), 63, 4, x < 885 ? '#7ea39a' : '#7a9e90');
  ol(597, 749, 68, 1.5, '#8f8878'); ol(749, 901, 68, 1.5, '#7e9c8e'); ol(901, 2439, 68, 1.5, '#7e9c8e');
  ol(597, 671, 73, 1.5, '#6f7aa0'); ol(672, 749, 73, 1.5, '#6f7aa0'); ol(749, 2439, 73, 1.5, '#66788c');
  ol(749, 794, 77, 3, '#7c8a80'); ol(794, 901, 77, 3, '#77688a'); ol(901, 2439, 76, 2, '#77688a');
  ol(901, 2439, 81, 2, '#6f8a84'); ol(901, 2400, 85, 3, '#6f8a84');
  ol(597, 2439, 85, 1, '#66807f');
  ol(901, 2400, 88, 1.5, '#6f7aa0'); ol(597, 671, 87, 1, '#7384a4');
  ol(901, 2391, 92, 3, '#8d7fb0');
  document.getElementById('overview').innerHTML = '<svg viewBox="0 0 1870 34">' + ov + '</svg>';
})();
```
